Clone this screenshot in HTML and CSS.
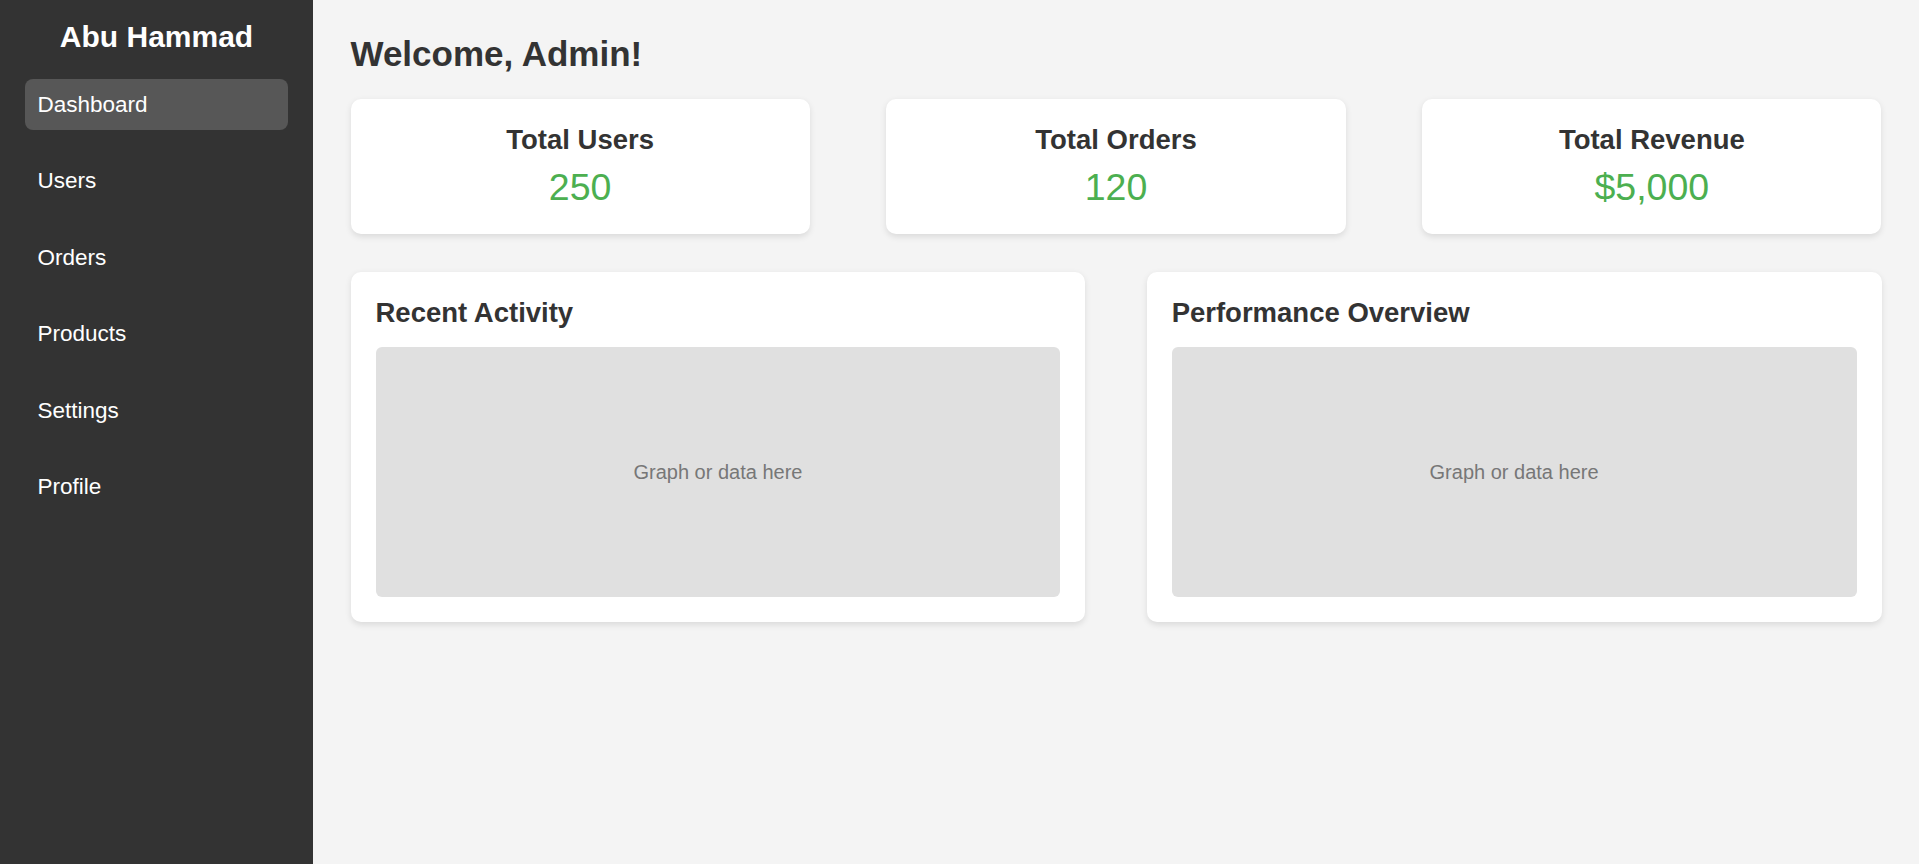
FILE: index.html
```html
<!DOCTYPE html>
<html lang="en">
<head>
<meta charset="utf-8">
<title>Admin Dashboard</title>
<link rel="stylesheet" href="styles.css">
</head>
<body>
  <aside class="sidebar">
    <h2 class="brand">Abu Hammad</h2>
    <ul class="nav">
      <li><a class="nav-link active" href="#">Dashboard</a></li>
      <li><a class="nav-link" href="#">Users</a></li>
      <li><a class="nav-link" href="#">Orders</a></li>
      <li><a class="nav-link" href="#">Products</a></li>
      <li><a class="nav-link" href="#">Settings</a></li>
      <li><a class="nav-link" href="#">Profile</a></li>
    </ul>
  </aside>
  <main class="main">
    <h1 class="welcome">Welcome, Admin!</h1>
    <section class="stats">
      <div class="card stat">
        <h3 class="card-title">Total Users</h3>
        <p class="stat-value">250</p>
      </div>
      <div class="card stat">
        <h3 class="card-title">Total Orders</h3>
        <p class="stat-value">120</p>
      </div>
      <div class="card stat">
        <h3 class="card-title">Total Revenue</h3>
        <p class="stat-value">$5,000</p>
      </div>
    </section>
    <section class="panels">
      <div class="card panel">
        <h3 class="card-title panel-title">Recent Activity</h3>
        <div class="placeholder">Graph or data here</div>
      </div>
      <div class="card panel">
        <h3 class="card-title panel-title">Performance Overview</h3>
        <div class="placeholder">Graph or data here</div>
      </div>
    </section>
  </main>
</body>
</html>
```

FILE: styles.css
```css
* {
  box-sizing: border-box;
}

html, body {
  height: 100%;
}

body {
  margin: 0;
  display: flex;
  font-family: "Liberation Sans", Arial, sans-serif;
  background: #f4f4f4;
  color: #333;
  overflow: hidden;
}

.sidebar {
  width: 313px;
  flex-shrink: 0;
  height: 100vh;
  background: #333;
  color: #fff;
  padding: 20px 25px;
}

.brand {
  margin: 0 0 25px;
  font-size: 30px;
  font-weight: bold;
  text-align: center;
}

.nav {
  list-style: none;
  margin: 0;
  padding: 0;
}

.nav li {
  margin-bottom: 25.5px;
}

.nav-link {
  display: block;
  color: #fff;
  text-decoration: none;
  font-size: 22.5px;
  padding: 12.5px 12.5px;
  border-radius: 8px;
}

.nav-link.active {
  background: #575757;
}

.main {
  flex: 1;
  padding: 34px 37.5px;
}

.welcome {
  margin: 0 0 25px;
  font-size: 35px;
  font-weight: bold;
  color: #333;
}

.stats {
  display: flex;
  justify-content: space-between;
}

.card {
  background: #fff;
  border-radius: 10px;
  box-shadow: 0 2.5px 6px rgba(0, 0, 0, 0.1);
  padding: 25px;
}

.stat {
  width: 30%;
  text-align: center;
}

.card-title {
  margin: 0 0 10px;
  font-size: 27.5px;
  font-weight: bold;
  color: #333;
}

.stat-value {
  margin: 0;
  font-size: 37.5px;
  color: #4caf50;
}

.panels {
  display: flex;
  justify-content: space-between;
  margin-top: 37.5px;
}

.panel {
  width: 48%;
}

.panel-title {
  margin-bottom: 18.5px;
}

.placeholder {
  height: 250px;
  background: #e0e0e0;
  border-radius: 6px;
  display: flex;
  align-items: center;
  justify-content: center;
  font-size: 20px;
  color: #777;
}
```
